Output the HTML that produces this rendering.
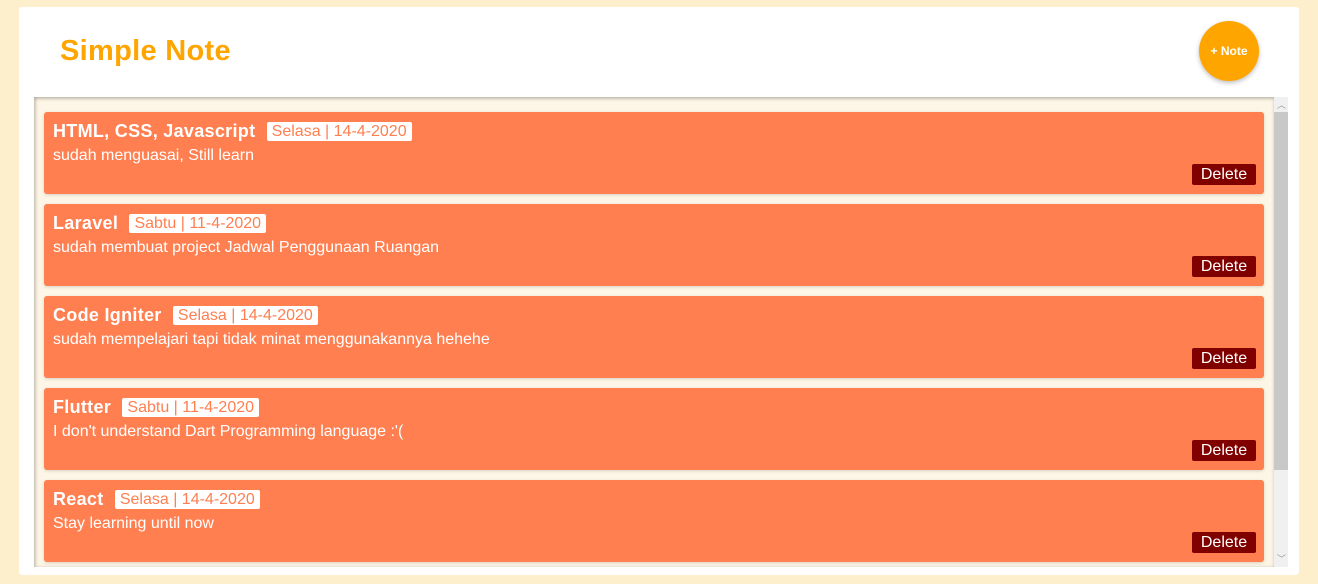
<!DOCTYPE html>
<html><head><style>
body{margin:0;width:1318px;height:584px;background:#fdefcb;font-family:"Liberation Sans",Arial,sans-serif;position:relative;overflow:hidden}
.main{position:absolute;left:19px;top:7px;width:1280px;height:568px;background:#fff;border-radius:3px}
h1{position:absolute;left:41px;top:28px;margin:0;font-size:29px;letter-spacing:0.3px;color:#ffa500;font-weight:bold}
.btn{position:absolute;left:1180px;top:14px;width:60px;height:60px;border-radius:50%;background:#ffa500;color:#fff;font-size:12px;font-weight:bold;text-align:center;line-height:60px;box-shadow:0 2px 5px rgba(0,0,0,.25)}
.list{position:absolute;left:15px;top:90px;width:1240px;height:470px;background:#fdf6e6;box-shadow:inset 0 2px 3px rgba(0,0,0,.2),inset 2px 0 3px rgba(0,0,0,.15)}
.sb{position:absolute;left:1255px;top:90px;width:14px;height:470px;background:#f0f0f0}
.thumb{position:absolute;left:0;top:15px;width:14px;height:358px;background:#c8c8c8}
.arr{position:absolute;left:3px;font-size:9px;color:#999}
.card{position:absolute;left:25px;width:1220px;height:82px;background:#ff7f50;border-radius:3px;box-shadow:0 1px 3px rgba(0,0,0,.15);color:#fff}
.t{position:absolute;left:9px;top:9px;font-size:18px;font-weight:bold;white-space:nowrap;letter-spacing:0.3px}
.d{display:inline-block;background:#fff;color:#ff7f50;font-size:16px;font-weight:normal;letter-spacing:0;padding:0 5px;border-radius:2px;margin-left:6px;line-height:19px;vertical-align:1px}
.b{position:absolute;left:9px;top:35px;font-size:16px}
.del{position:absolute;left:1148px;top:52px;width:64px;height:21px;background:#800000;border-radius:2px;font-size:16px;text-align:center;line-height:21px}
</style></head><body>
<div class="main">
<h1>Simple Note</h1>
<div class="btn">+ Note</div>
<div class="list"></div>
<div class="sb"><div class="arr" style="top:1px">︿</div><div class="thumb"></div><div class="arr" style="top:455px">﹀</div></div>
<div class="card" style="top:105px"><div class="t">HTML, CSS, Javascript <span class="d">Selasa | 14-4-2020</span></div><div class="b">sudah menguasai, Still learn</div><div class="del">Delete</div></div>
<div class="card" style="top:197px"><div class="t">Laravel <span class="d">Sabtu | 11-4-2020</span></div><div class="b">sudah membuat project Jadwal Penggunaan Ruangan</div><div class="del">Delete</div></div>
<div class="card" style="top:289px"><div class="t">Code Igniter <span class="d">Selasa | 14-4-2020</span></div><div class="b">sudah mempelajari tapi tidak minat menggunakannya hehehe</div><div class="del">Delete</div></div>
<div class="card" style="top:381px"><div class="t">Flutter <span class="d">Sabtu | 11-4-2020</span></div><div class="b">I don't understand Dart Programming language :'(</div><div class="del">Delete</div></div>
<div class="card" style="top:473px;height:82px"><div class="t">React <span class="d">Selasa | 14-4-2020</span></div><div class="b">Stay learning until now</div><div class="del">Delete</div></div>
</div>
</body></html>
